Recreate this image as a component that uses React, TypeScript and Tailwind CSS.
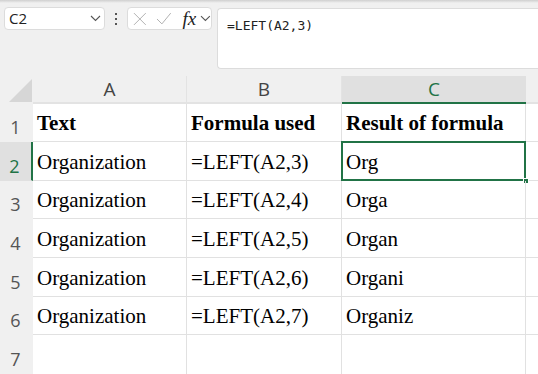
import React from 'react';

const ROWS = [
  { n: 1, h: 38, cells: ['Text', 'Formula used', 'Result of formula'], bold: true },
  { n: 2, h: 39, cells: ['Organization', '=LEFT(A2,3)', 'Org'] },
  { n: 3, h: 38, cells: ['Organization', '=LEFT(A2,4)', 'Orga'] },
  { n: 4, h: 39, cells: ['Organization', '=LEFT(A2,5)', 'Organ'] },
  { n: 5, h: 39, cells: ['Organization', '=LEFT(A2,6)', 'Organi'] },
  { n: 6, h: 38, cells: ['Organization', '=LEFT(A2,7)', 'Organiz'] },
  { n: 7, h: 39, cells: ['', '', ''] },
];

const COLS = [
  { key: 'A', w: 'w-[154px]' },
  { key: 'B', w: 'w-[155px]' },
  { key: 'C', w: 'w-[184px]' },
];

const uiFont = { fontFamily: '"Open Sans", "Noto Sans", sans-serif' };
const cellFont = { fontFamily: '"Liberation Serif", "Times New Roman", serif' };

function Chevron({ className = '' }: { className?: string }) {
  return (
    <svg className={className} width="11" height="7" viewBox="0 0 11 7" fill="none">
      <path d="M1 1l4.5 4.5L10 1" stroke="#555" strokeWidth="1.1" />
    </svg>
  );
}

function Toolbar() {
  return (
    <div className="flex items-start h-[73px]">
      <div className="ml-[4px] mt-[4px] w-[101px] h-[23px] bg-white border border-[#dcdcdc] rounded-[4px] flex items-center justify-between pl-[4px] pr-[3px]">
        <span className="text-[15px] text-[#222]" style={uiFont}>C2</span>
        <Chevron />
      </div>
      <div className="w-[22px] h-[31px] flex flex-col items-center justify-center gap-[3px]">
        <span className="w-[2px] h-[2px] bg-[#555]" />
        <span className="w-[2px] h-[2px] bg-[#555]" />
        <span className="w-[2px] h-[2px] bg-[#555]" />
      </div>
      <div className="mt-[4px] w-[85px] h-[23px] bg-white border border-[#dcdcdc] rounded-[4px] flex items-center pl-[4px]">
        <svg width="14" height="14" viewBox="0 0 14 14" fill="none" className="ml-[1px]">
          <path d="M1 1l12 12M13 1L1 13" stroke="#b0b0b0" strokeWidth="1" />
        </svg>
        <svg width="16" height="13" viewBox="0 0 16 13" fill="none" className="ml-[9px]">
          <path d="M1 7l5 5L15 1" stroke="#b0b0b0" strokeWidth="1" />
        </svg>
        <span className="ml-[11px] text-[19px] italic leading-none text-[#222]" style={cellFont}>
          fx
        </span>
        <Chevron className="ml-[4px]" />
      </div>
      <div className="ml-[5px] mt-[5px] flex-1 h-[61px] bg-white border border-r-0 border-[#dcdcdc] rounded-l-[4px] pl-[9px] pt-[3px]">
        <span className="text-[13px] text-[#222]" style={{ fontFamily: '"DejaVu Sans Mono", monospace' }}>
          =LEFT(A2,3)
        </span>
      </div>
    </div>
  );
}

function HeaderRow() {
  return (
    <div className="flex h-[28px] items-end">
      <div className="w-[33px] h-[28px] flex items-end justify-end pr-[1px] pb-[2px]">
        <svg width="23" height="23" viewBox="0 0 23 23">
          <path d="M23 0V23H0Z" fill="#d6d6d6" />
        </svg>
      </div>
      {COLS.map((c) => {
        const sel = c.key === 'C';
        return (
          <div
            key={c.key}
            className={`${c.w} h-[28px] flex items-center justify-center border-b-2 ${
              sel ? 'bg-[#e0e0e0] border-[#217346] text-[#217346]' : 'border-[#e3e3e3] text-[#444] border-r border-r-[#e3e3e3]'
            }`}
            style={uiFont}
          >
            <span className="text-[19px] leading-none">{c.key}</span>
          </div>
        );
      })}
      <div className="flex-1 h-[28px] border-b-2 border-[#e3e3e3]" />
    </div>
  );
}

function Row({ row }: { row: (typeof ROWS)[number] }) {
  const selRow = row.n === 2;
  return (
    <div className="flex" style={{ height: row.h }}>
      <div
        className={`w-[33px] shrink-0 flex items-end justify-center pb-[3px] border-b ${
          selRow ? 'bg-[#e0e0e0] text-[#217346] border-r-2 border-r-[#217346] border-b-[#e0e0e0]' : 'text-[#555] border-b-[#f0f0f0]'
        }`}
        style={uiFont}
      >
        <span className="text-[18px] leading-[22px] -ml-[2px]">{row.n}</span>
      </div>
      <div className="flex bg-white flex-1">
        {COLS.map((c, i) => {
          const active = selRow && c.key === 'C';
          return (
            <div
              key={c.key}
              className={`${c.w} relative flex items-end pl-[4px] pb-[7px] border-b border-r border-[#e1e1e1] ${
                row.n === 7 ? 'border-b-0' : ''
              }`}
              style={cellFont}
            >
              <span className={`text-[21px] leading-[21px] text-black whitespace-nowrap ${row.bold ? 'font-bold' : ''}`}>
                {row.cells[i]}
              </span>
              {active && (
                <>
                  <div className="absolute -left-[1px] -top-[1px] -right-[1px] -bottom-[1px] border-2 border-[#217346] pointer-events-none" />
                  <div className="absolute -right-[4px] -bottom-[4px] w-[6px] h-[6px] bg-[#217346] border border-white" />
                </>
              )}
            </div>
          );
        })}
        <div className={`flex-1 border-b border-[#e1e1e1] ${row.n === 7 ? 'border-b-0' : ''}`} />
      </div>
    </div>
  );
}

export default function App() {
  return (
    <div className="w-[538px] h-[374px] overflow-hidden bg-[#f0f0f0]">
      <div className="h-[3px] bg-gradient-to-b from-[#cfcfcf] to-[#f0f0f0]" />
      <Toolbar />
      <HeaderRow />
      {ROWS.map((r) => (
        <Row key={r.n} row={r} />
      ))}
    </div>
  );
}
